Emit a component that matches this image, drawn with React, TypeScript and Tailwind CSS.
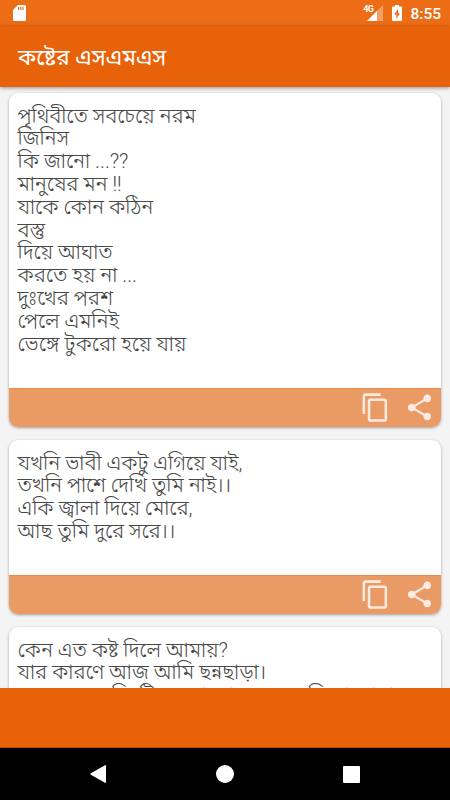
import { ReactNode } from 'react';
import clsx from 'clsx';

interface ISms {
  id: number;
  lines: string[];
  className: string;
}

const smsList: ISms[] = [
  {
    id: 1,
    lines: [
      'পৃথিবীতে সবচেয়ে নরম',
      'জিনিস',
      'কি জানো ...??',
      'মানুষের মন !!',
      'যাকে কোন কঠিন',
      'বস্তু',
      'দিয়ে আঘাত',
      'করতে হয় না ...',
      'দুঃখের পরশ',
      'পেলে এমনিই',
      'ভেঙ্গে টুকরো হয়ে যায়',
    ],
    className: 'h-[334px]',
  },
  {
    id: 2,
    lines: [
      'যখনি ভাবী একটু এগিয়ে যাই,',
      'তখনি পাশে দেখি তুমি নাই।।',
      'একি জ্বালা দিয়ে মোরে,',
      'আছ তুমি দুরে সরে।।',
    ],
    className: 'h-[174px]',
  },
  {
    id: 3,
    lines: [
      'কেন এত কষ্ট দিলে আমায়?',
      'যার কারণে আজ আমি ছন্নছাড়া।',
      'মনে কর সে দিনটির কথা আর যখন তুমি ভালোবাস',
    ],
    className: 'h-[174px]',
  },
];

function CopyIcon() {
  return (
    <svg viewBox="0 0 24 24" className="size-[31px]" fill="currentColor">
      <path d="M16 1H4c-1.1 0-2 .9-2 2v14h2V3h12V1zm3 4H8c-1.1 0-2 .9-2 2v14c0 1.1.9 2 2 2h11c1.1 0 2-.9 2-2V7c0-1.1-.9-2-2-2zm0 16H8V7h11v14z" />
    </svg>
  );
}

function ShareIcon() {
  return (
    <svg viewBox="0 0 24 24" className="size-[31px]" fill="currentColor">
      <path d="M18 16.08c-.76 0-1.44.3-1.96.77L8.91 12.7c.05-.23.09-.46.09-.7s-.04-.47-.09-.7l7.05-4.11c.54.5 1.25.81 2.04.81 1.66 0 3-1.34 3-3s-1.34-3-3-3-3 1.34-3 3c0 .24.04.47.09.7L8.04 9.81C7.5 9.31 6.79 9 6 9c-1.66 0-3 1.34-3 3s1.34 3 3 3c.79 0 1.5-.31 2.04-.81l7.12 4.16c-.05.21-.08.43-.08.65 0 1.61 1.31 2.92 2.92 2.92s2.92-1.31 2.92-2.92-1.31-2.92-2.92-2.92z" />
    </svg>
  );
}

function IconButton({ label, children }: { label: string; children: ReactNode }) {
  return (
    <button type="button" aria-label={label} className="text-white/80">
      {children}
    </button>
  );
}

function StatusBar() {
  return (
    <div className="flex h-[26px] shrink-0 items-center bg-[#ed6d17] pr-[9px] pl-[13px] text-white">
      <svg viewBox="0 0 13 16" className="h-4 w-[13px]">
        <path
          fill="currentColor"
          fillRule="evenodd"
          d="M5 0h6.5Q13 0 13 1.5v13q0 1.500-1.500 1.500h-10Q0 16 0 14.500V5zM5 2v3h1.200V2zm2.200 0v3h1.200V2zm2.200 0v3h1.200V2z"
        />
      </svg>
      <span className="mb-2 ml-auto text-[9px] leading-none font-bold tracking-[-0.5px]">
        4G
      </span>
      <svg viewBox="0 0 16 16" className="-ml-[6px] h-4 w-4" fill="currentColor">
        <path d="M0 16 16 0v16z" opacity=".35" />
        <path d="M0 16 10 6v10z" />
      </svg>
      <svg viewBox="0 0 10 16" className="ml-[9px] h-4 w-[10px]">
        <path
          fill="currentColor"
          fillRule="evenodd"
          d="M3 0h4v1.600h2q1 0 1 1V15q0 1-1 1H1q-1 0-1-1V2.600q0-1 1-1h2zM6 4 2 9.500h2.400V14L8 8.200H6z"
        />
      </svg>
      <span className="mt-[3px] ml-2 text-[15.500px] leading-none font-medium">
        8:55
      </span>
    </div>
  );
}

function SmsCard({ sms }: { sms: ISms }) {
  return (
    <article
      className={clsx(
        'flex shrink-0 flex-col overflow-hidden rounded-[9px] bg-white shadow-[0_1px_3px_rgba(0,0,0,0.35)]',
        sms.className,
      )}
    >
      <div className="flex-1 pt-[11.600px] pl-[8.500px] text-[20.500px] leading-[22.800px] font-light whitespace-nowrap text-[#484848]">
        {sms.lines.map((line) => (
          <p key={line}>{line}</p>
        ))}
      </div>
      <footer className="flex h-[39px] shrink-0 items-center justify-end gap-[13px] border-t border-[#eb8a40] bg-[#e99a65] pr-[6px] pb-[2px]">
        <IconButton label="কপি">
          <CopyIcon />
        </IconButton>
        <IconButton label="শেয়ার">
          <ShareIcon />
        </IconButton>
      </footer>
    </article>
  );
}

function NavigationBar() {
  return (
    <nav className="flex h-[52px] shrink-0 items-center justify-between bg-black pr-[90px] pl-[90px] text-white">
      <svg viewBox="0 0 17 18" className="h-[18px] w-[17px]" fill="currentColor">
        <path d="M.8 8.300 15 .2q1-.5 1 .6v16.400q0 1.100-1 .6L.8 9.700q-1-.7 0-1.400z" />
      </svg>
      <div className="size-[18px] rounded-full bg-white" />
      <div className="size-[17px] rounded-[1px] bg-white" />
    </nav>
  );
}

export default function App() {
  return (
    <div className="flex h-[800px] w-[450px] flex-col overflow-hidden bg-[#f4f4f4] font-[Roboto,'Noto_Sans_Bengali','Noto_Sans',sans-serif]">
      <StatusBar />
      <header className="z-10 flex h-[61px] shrink-0 items-center bg-[#e76208] pt-[2px] pl-[18px] text-white shadow-[0_1px_4px_rgba(0,0,0,0.4)]">
        <h1 className="text-[22.500px] leading-none font-normal">কষ্টের এসএমএস</h1>
      </header>
      <main className="flex min-h-0 flex-1 flex-col gap-[13px] overflow-hidden px-[9px] pt-[6px]">
        {smsList.map((sms) => (
          <SmsCard key={sms.id} sms={sms} />
        ))}
      </main>
      <div className="h-[60px] shrink-0 border-b border-[#b34b05] bg-[#e76208]" />
      <NavigationBar />
    </div>
  );
}
